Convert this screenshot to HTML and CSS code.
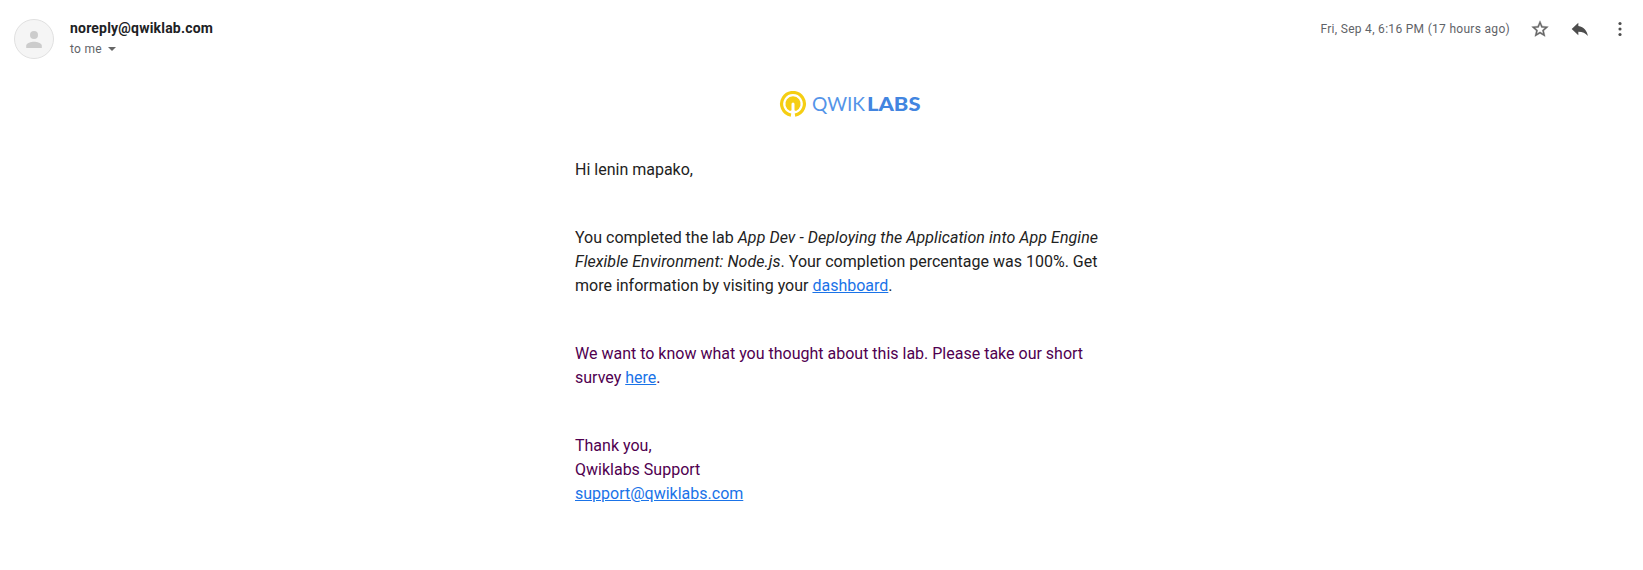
FILE: index.html
```html
<!DOCTYPE html>
<html lang="en">
<head>
<meta charset="utf-8">
<title>Qwiklabs message</title>
<link rel="stylesheet" href="styles.css">
</head>
<body>
<header class="header">
  <svg class="avatar" viewBox="0 0 40 40" width="40" height="40"><circle cx="20" cy="20" r="19.5" fill="#f5f5f5" stroke="#e0e0e0"/><circle cx="20" cy="16" r="4" fill="#ccc"/><path d="M12.2 29v-2.200c0-2.600 5-4 7.800-4s7.800 1.400 7.800 4V29z" fill="#ccc"/></svg>
  <div class="sender">
    <div class="name">noreply@qwiklab.com</div>
    <div class="to">to me<svg class="caret" viewBox="0 0 8 4" width="8" height="4"><path d="M0 0h8L4 4z" fill="#666"/></svg></div>
  </div>
  <div class="actions">
    <span class="date">Fri, Sep 4, 6:16 PM (17 hours ago)</span>
    <svg class="star" viewBox="0 0 24 24" width="20" height="20"><path fill="#666" stroke="#666" stroke-width=".4" d="M22 9.240l-7.190-.62L12 2 9.190 8.630 2 9.240l5.460 4.730L5.820 21 12 17.270 18.180 21l-1.630-7.030L22 9.240zM12 15.400l-3.760 2.270 1-4.280-3.320-2.880 4.380-.38L12 6.100l1.710 4.040 4.380.38-3.320 2.880 1 4.280L12 15.400z"/></svg>
    <svg class="reply" viewBox="0 0 24 24" width="20" height="20"><path fill="#4d4d4d" d="M10 8.500V4.500l-8 7.500 8 7.500v-4.300c5 0 8.800 1.600 11.500 5.300-1-5.500-4.500-11-11.500-12z"/></svg>
    <svg class="more" viewBox="0 0 24 24" width="20" height="20"><g fill="#4d4d4d"><circle cx="12" cy="5.400" r="1.900"/><circle cx="12" cy="12" r="1.900"/><circle cx="12" cy="18.600" r="1.900"/></g></svg>
  </div>
</header>
<main class="message">
  <svg class="logo" viewBox="0 0 142 28" width="142" height="28">
    <path d="M12 24.100A11.400 11.400 0 1 1 16 24.100" fill="none" stroke="#f5ce13" stroke-width="3.200"/>
    <path d="M12.500 19.200L11 20A7.700 7.700 0 1 1 17 20L15.500 19.200V13a1.500 1.500 0 0 0-3 0z" fill="#f5ce13"/>
    <text class="thin" x="33" y="19.500" textLength="53" lengthAdjust="spacingAndGlyphs">QWIK</text>
    <text class="heavy" x="88" y="19.500" textLength="53.5" lengthAdjust="spacingAndGlyphs">LABS</text>
  </svg>
  <p>Hi lenin mapako,</p>
  <p>You completed the lab <em>App Dev - Deploying the Application into App Engine Flexible Environment: Node.js</em>. Your completion percentage was 100%. Get more information by visiting your <a href="#">dashboard</a>.</p>
  <p class="quoted">We want to know what you thought about this lab. Please take our short survey <a href="#">here</a>.</p>
  <p class="quoted">Thank you,<br>Qwiklabs Support<br><a href="#">support@qwiklabs.com</a></p>
</main>
</body>
</html>
```
FILE: styles.css
```css
body { margin: 0; background: #fff; font-family: Roboto, sans-serif; color: #222; }
.header { display: flex; align-items: flex-start; height: 71px; padding: 19px 14px 0; box-sizing: border-box; }
.sender { margin-left: 16px; }
.name { padding-bottom: 2px; font-size: 14px; font-weight: 700; line-height: 18px; letter-spacing: .2px; color: #202124; }
.to { display: flex; align-items: center; font-size: 12px; line-height: 20px; letter-spacing: .3px; color: #5f6368; }
.caret { margin-left: 6px; }
.actions { display: flex; align-items: center; height: 20px; margin-left: auto; }
.date { font-size: 12px; letter-spacing: .3px; color: #5f6368; margin-right: 20px; }
.star, .reply { margin-right: 20px; }
.more { margin-right: -1px; }
.message { width: 550px; margin: 0 auto; padding-left: 57px; }
.logo { display: block; margin: 20px auto 39px; }
.thin, .heavy { font-family: Lato, sans-serif; font-size: 19px; }
.thin { font-weight: 400; fill: #5494e8; }
.heavy { font-weight: 900; fill: #4285e0; }
.message p { margin: 0 0 44px; font-size: 16px; line-height: 24px; }
.message em { letter-spacing: .06px; }
.message .quoted { color: #500050; }
.message a { color: #1a73e8; text-decoration: underline; }
```
